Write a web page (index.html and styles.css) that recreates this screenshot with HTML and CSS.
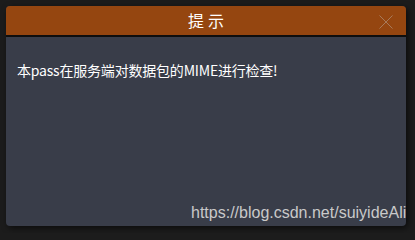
FILE: index.html
```html
<!DOCTYPE html>
<html lang="zh">
<head>
<meta charset="utf-8">
<link rel="stylesheet" href="styles.css">
</head>
<body>
<div class="dialog">
  <div class="header">
    <span class="title">提示</span>
    <span class="close">
      <svg width="14" height="14" viewBox="0 0 14 14"><path d="M0.5 0.5L13.5 13.5M13.5 0.5L0.5 13.5" stroke="#a87a5a" stroke-width="1" fill="none"/></svg>
    </span>
  </div>
  <div class="content">本pass在服务端对数据包的MIME进行检查!</div>
</div>
<div class="watermark">https://blog.csdn.net/suiyideAli</div>
</body>
</html>
```
FILE: styles.css
```css
html, body {
  margin: 0;
  padding: 0;
}
body {
  width: 415px;
  height: 233px;
  background: #1c1c1c;
  position: relative;
  overflow: hidden;
  padding: 6px;
  box-sizing: border-box;
}
.dialog {
  width: 400px;
  height: 220px;
  background: #393d49;
  border-radius: 4px;
  box-shadow: 2px 2px 6px rgba(0,0,0,0.6);
  overflow: hidden;
  display: flex;
  flex-direction: column;
}
.header {
  height: 29px;
  background: #954610;
  border-bottom: 2px solid #0e0e0e;
  position: relative;
  display: flex;
  align-items: center;
  justify-content: center;
}
.title {
  color: #ffffff;
  font-family: "Noto Sans CJK SC", sans-serif;
  font-size: 16px;
  letter-spacing: 4px;
  margin-left: 4px;
  line-height: 29px;
}
.close {
  position: absolute;
  right: 13px;
  top: 9px;
  width: 14px;
  height: 14px;
  display: flex;
}
.content {
  padding: 21px 11px;
  color: #ffffff;
  font-family: "Noto Sans CJK SC", sans-serif;
  font-size: 14px;
  line-height: 24px;
  letter-spacing: -0.2px;
}
.watermark {
  position: absolute;
  left: 191px;
  top: 203px;
  color: #c9c9c9;
  font-family: "Liberation Sans", Arial, sans-serif;
  font-size: 16px;
  line-height: 20px;
  white-space: nowrap;
}
```
